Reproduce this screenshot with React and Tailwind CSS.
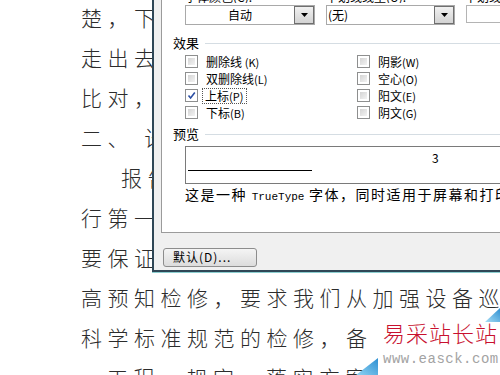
import React from 'react';

const cjk = { fontFamily: '"Noto Sans CJK SC", "Noto Sans", sans-serif' };
const mono = { fontFamily: '"Liberation Mono", "DejaVu Sans Mono", monospace' };

const docLines = [
  { text: '楚，下一步工作要求', indent: 0 },
  { text: '走出去，请进来', indent: 0 },
  { text: '比对，找差距', indent: 0 },
  { text: '二、 设备管理', indent: 0 },
  { text: '报告期内，设备', indent: 40 },
  { text: '行第一次检修', indent: 0 },
  { text: '要保证设备运行', indent: 0 },
  { text: '高预知检修，要求我们从加强设备巡视', indent: 0 },
  { text: '科学标准规范的检修，备品备件', indent: 0 },
  { text: '工程、规定，落实方案到位', indent: 26 },
];

const CheckBox = ({ checked }) => (
  <span className="w-[13px] h-[13px] border border-[#8e8f8f] bg-white p-[2px] flex shrink-0">
    <span className={`flex-1 relative ${checked ? 'bg-white' : 'bg-linear-to-br from-[#d4d4d4] to-[#f3f3f3]'}`}>
      {checked && (
        <svg width="11" height="11" viewBox="0 0 11 11" className="absolute -left-[2px] -top-[2px]">
          <path d="M2.5 5.5 L4.6 8 L8.8 2.6" fill="none" stroke="#2b4ea3" strokeWidth="1.6" />
        </svg>
      )}
    </span>
  </span>
);

const Option = ({ label, hotkey, checked, focused }) => (
  <div className="h-[17px] flex items-center gap-[7px]">
    <CheckBox checked={checked} />
    <span
      className={`text-[12px] leading-[14px] text-black px-[1px] whitespace-nowrap ${
        focused ? 'outline outline-1 outline-dotted outline-[#555] -ml-[2px] pl-[2px] pr-[3px]' : ''
      }`}
    >
      {label}
      <span className="text-[11px]">({hotkey})</span>
    </span>
  </div>
);

const DropButton = () => (
  <span className="w-[20px] h-full border border-[#6f6f6f] bg-linear-to-b from-[#f1f1f1] to-[#d3d3d3] flex items-center justify-center shrink-0">
    <svg width="7" height="4" viewBox="0 0 7 4">
      <path d="M0 0 H7 L3.5 4 Z" fill="#000" />
    </svg>
  </span>
);

const Legend = ({ title }) => (
  <div className="h-[14px] pl-[11px] flex items-center gap-[6px]">
    <span className="text-[13px] leading-[14px] text-black">{title}</span>
    <span className="flex-1 h-px bg-[#d5dde3]" />
  </div>
);

export default function App() {
  return (
    <div className="relative w-[500px] h-[375px] overflow-hidden bg-white" style={cjk}>
      {/* document behind the dialog */}
      <div className="pl-[81px] -mt-[3px] text-[21px] font-light leading-[40px] tracking-[5.5px] text-[#2c2c2c] whitespace-nowrap">
        {docLines.map((l, i) => (
          <div key={i} style={{ paddingLeft: l.indent }}>
            {l.text}
          </div>
        ))}
      </div>

      {/* font dialog */}
      <div className="absolute left-[152px] top-0 w-[360px] h-[272px] border-l-2 border-b-2 border-[#2f4756] bg-[#f0f0f0] shadow-[0_1px_0_#8ccfd0] flex flex-col">
        <div className="ml-[7px] h-[233px] border-l border-b border-[#9b9b9b] bg-white flex flex-col">
          {/* top labels, cut by the screenshot edge */}
          <div className="-mt-[9px] h-[12px] pl-[23px] flex text-[12px] leading-[12px] text-black whitespace-nowrap overflow-hidden">
            <span className="w-[141px] shrink-0 overflow-hidden">字体颜色(C):</span>
            <span className="w-[139px] shrink-0 overflow-hidden">下划线线型(U):</span>
            <span className="shrink-0">下划线颜色(I):</span>
          </div>
          <div className="mt-[2px] h-[20px] pl-[23px] flex gap-[11px]">
            <div className="w-[130px] h-full border border-[#a9a9a9] flex shrink-0">
              <span className="flex-1 text-center text-[12px] leading-[18px] text-black">自动</span>
              <DropButton />
            </div>
            <div className="w-[129px] h-full border border-[#a9a9a9] flex shrink-0">
              <span className="flex-1 pl-[1px] text-[12px] leading-[18px] text-black">(无)</span>
              <DropButton />
            </div>
            <div className="w-[60px] h-[18px] border border-[#b4b4b4] shrink-0" />
          </div>

          <div className="mt-[11px]">
            <Legend title="效果" />
          </div>
          <div className="mt-[3px] pl-[23px] flex">
            <div className="w-[172px] flex flex-col">
              <Option label="删除线 " hotkey="K" />
              <Option label="双删除线" hotkey="L" />
              <Option label="上标" hotkey="P" checked focused />
              <Option label="下标" hotkey="B" />
            </div>
            <div className="flex flex-col">
              <Option label="阴影" hotkey="W" />
              <Option label="空心" hotkey="O" />
              <Option label="阳文" hotkey="E" />
              <Option label="阴文" hotkey="G" />
            </div>
          </div>

          <div className="mt-[6px]">
            <Legend title="预览" />
          </div>
          <div className="mt-[5px] ml-[23px] h-[38px] border border-[#7a7a7a] flex">
            <div className="w-[126px] pl-[2px] flex flex-col justify-end pb-[12px]">
              <div className="h-px bg-black" />
            </div>
            <div className="pl-[120px] pt-[4px] text-[12px] leading-[14px] text-black">3</div>
          </div>
          <div className="mt-[2px] pl-[23px] h-[16px] text-[14px] leading-[16px] tracking-[1.5px] text-black whitespace-nowrap">
            这是一种 <span style={mono} className="text-[11px] tracking-[0px]">TrueType</span> 字体，同时适用于屏幕和打印机。
          </div>
        </div>

        <div className="pl-[9px] pt-[10px]">
          <button className="w-[94px] h-[19px] border border-[#8d8d8d] rounded-[3px] bg-linear-to-b from-[#f5f5f5] to-[#dcdcdc] text-left pl-[9px] text-[12px] leading-[16px] text-black tracking-[1px]">
            默认(D)...
          </button>
        </div>
      </div>

      {/* watermark */}
      <div className="absolute left-[372px] top-[320px] w-[128px] h-[55px] bg-white flex flex-col pl-[11px]">
        <div className="text-[22px] font-light leading-[24px] tracking-[1px] text-[#c8102e] whitespace-nowrap">易采站长站</div>
        <div style={mono} className="mt-[9px] text-[14px] leading-[13px] tracking-[0.5px] text-[#a3a3a3]">
          www.easck.com
        </div>
      </div>
      <svg className="absolute left-[356px] top-[356px]" width="22" height="19" viewBox="0 0 22 19">
        <defs>
          <linearGradient id="tb" x1="0" y1="1" x2="1" y2="0">
            <stop offset="0" stopColor="#8fd3f2" />
            <stop offset="1" stopColor="#2d8fd2" />
          </linearGradient>
        </defs>
        <path d="M0 19 L22 2 L22 19 Z" fill="url(#tb)" />
      </svg>
      <svg className="absolute left-[485px] top-[308px]" width="15" height="14" viewBox="0 0 15 14">
        <defs>
          <linearGradient id="tt" x1="0" y1="1" x2="1" y2="0">
            <stop offset="0" stopColor="#a8def5" />
            <stop offset="1" stopColor="#2d8fd2" />
          </linearGradient>
        </defs>
        <path d="M0 14 L15 0 L15 14 Z" fill="url(#tt)" />
      </svg>
    </div>
  );
}
